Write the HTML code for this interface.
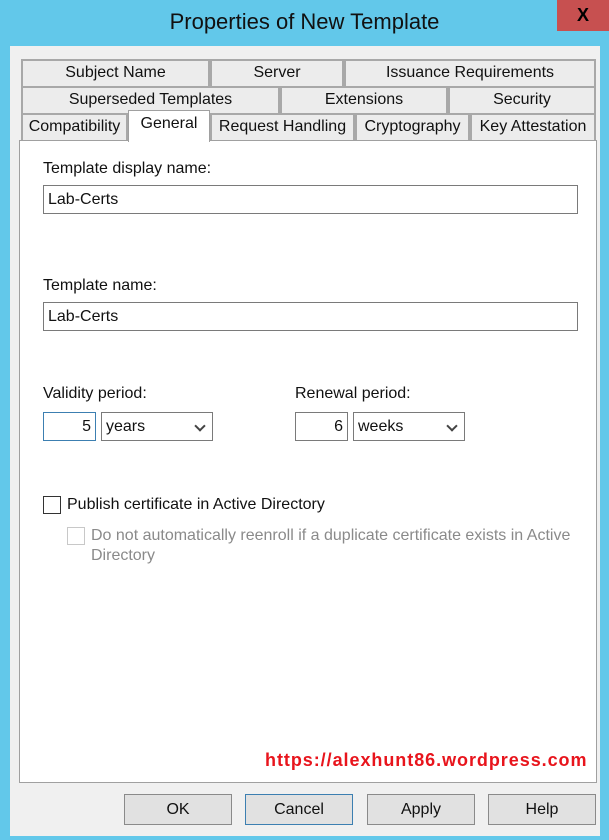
<!DOCTYPE html><html><head><style>
body{margin:0;width:609px;height:840px;background:#62c8ea;position:relative;overflow:hidden;font-family:"Liberation Sans",sans-serif;font-size:16px;color:#111}
div{position:absolute;box-sizing:border-box}
.t{border:2px solid #a8a8a8;border-bottom:none;background:#ececec;text-align:center;line-height:24px;height:27px}
.in{border:1px solid #7a7a7a;background:#fff;height:29px;line-height:27px;padding-left:4px}
.btn{border:1px solid #8a8a8a;background:#e1e1e1;height:31px;width:108px;text-align:center;line-height:29px;top:794px}
.cb{width:18px;height:18px;border:1px solid #333;background:#fff}
.arr{position:absolute;right:8px;top:9px;width:6px;height:6px;border-right:2px solid #444;border-bottom:2px solid #444;transform:rotate(45deg)}
</style></head><body>
<div style="left:0;top:0;width:609px;height:46px;text-align:center;line-height:44px;font-size:22px;color:#111">Properties of New Template</div>
<div style="left:557px;top:0;width:52px;height:31px;background:#c75050;color:#000;font-weight:bold;font-size:18px;text-align:center;line-height:30px">X</div>
<div style="left:10px;top:46px;width:590px;height:790px;background:#f0f0f0"></div>
<div class="t" style="left:21px;top:59px;width:189px">Subject Name</div>
<div class="t" style="left:210px;top:59px;width:134px">Server</div>
<div class="t" style="left:344px;top:59px;width:252px">Issuance Requirements</div>
<div class="t" style="left:21px;top:86px;width:259px">Superseded Templates</div>
<div class="t" style="left:280px;top:86px;width:168px">Extensions</div>
<div class="t" style="left:448px;top:86px;width:148px">Security</div>
<div class="t" style="left:21px;top:113px;width:107px">Compatibility</div>
<div class="t" style="left:210px;top:113px;width:145px">Request Handling</div>
<div class="t" style="left:355px;top:113px;width:115px">Cryptography</div>
<div class="t" style="left:470px;top:113px;width:126px">Key Attestation</div>
<div style="left:19px;top:140px;width:578px;height:643px;background:#fff;border:1px solid #a0a0a0"></div>
<div style="left:128px;top:110px;width:82px;height:32px;background:#fff;border:1px solid #a0a0a0;border-bottom:none;text-align:center;line-height:26px">General</div>
<div style="left:43px;top:160px">Template display name:</div>
<div class="in" style="left:43px;top:185px;width:535px">Lab-Certs</div>
<div style="left:43px;top:277px">Template name:</div>
<div class="in" style="left:43px;top:302px;width:535px">Lab-Certs</div>
<div style="left:43px;top:385px">Validity period:</div>
<div class="in" style="left:43px;top:412px;width:53px;border-color:#3c7fb1;text-align:right;padding-right:4px">5</div>
<div class="in" style="left:101px;top:412px;width:112px">years<span class="arr"></span></div>
<div style="left:295px;top:385px">Renewal period:</div>
<div class="in" style="left:295px;top:412px;width:53px;text-align:right;padding-right:4px">6</div>
<div class="in" style="left:353px;top:412px;width:112px">weeks<span class="arr"></span></div>
<div class="cb" style="left:43px;top:496px"></div>
<div style="left:67px;top:496px">Publish certificate in Active Directory</div>
<div class="cb" style="left:67px;top:527px;border-color:#c8c8c8"></div>
<div style="left:91px;top:526px;width:490px;color:#8a8a8a;line-height:20px">Do not automatically reenroll if a duplicate certificate exists in Active Directory</div>
<div style="left:265px;top:750px;color:#e8141c;font-weight:bold;font-size:18px;white-space:nowrap;letter-spacing:0.95px">https://alexhunt86.wordpress.com</div>
<div class="btn" style="left:124px">OK</div>
<div class="btn" style="left:245px;border-color:#3c7fb1">Cancel</div>
<div class="btn" style="left:367px">Apply</div>
<div class="btn" style="left:488px">Help</div>
</body></html>
